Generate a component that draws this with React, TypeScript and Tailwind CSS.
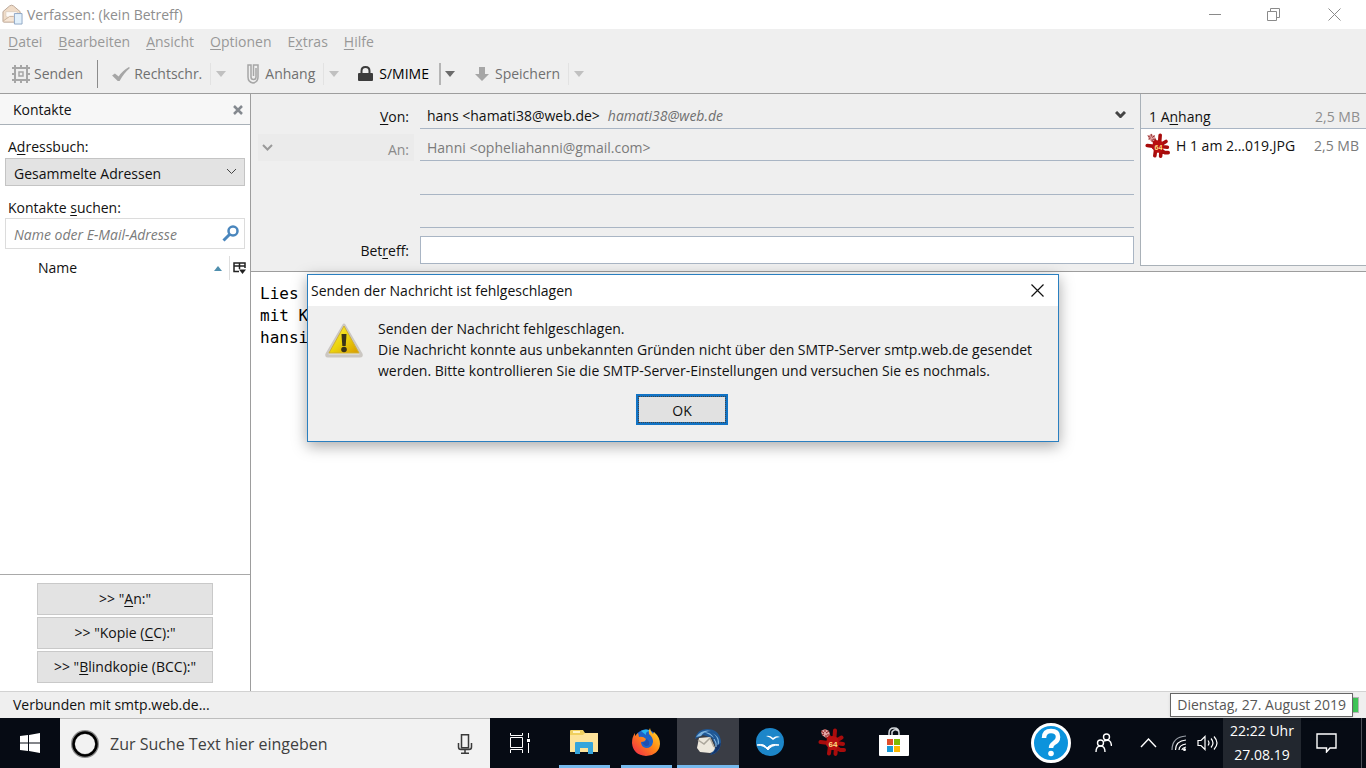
import type { ReactNode } from "react";

const menus = [
  ["", "D", "atei"],
  ["", "B", "earbeiten"],
  ["", "A", "nsicht"],
  ["", "O", "ptionen"],
  ["E", "x", "tras"],
  ["", "H", "ilfe"],
];

const recipientButtons = [
  ['>> "', "A", 'n:"'],
  ['>> "Kopie (', "C", 'C):"'],
  ['>> "', "B", 'lindkopie (BCC):"'],
];

const Mnemonic = ({ parts }: { parts: string[] }) => (
  <span className="whitespace-pre">
    {parts[0]}
    <u className="underline-offset-2">{parts[1]}</u>
    {parts[2]}
  </span>
);

const ComposeIcon = () => (
  <svg width="21" height="21" viewBox="0 0 22 22" aria-hidden="true">
    <path d="M1 8 8 2q2-1.500 4 0l7 6v10q0 1-1 1H2q-1 0-1-1z" fill="#f0dcc8" stroke="#b9a595" />
    <path d="M4 8h12v5l-6 3-6-3z" fill="#fdfaf7" stroke="#e0d0c0" />
    <path d="m1 18 7-5h4l6 5" fill="#f6e6d6" stroke="#c9b29c" />
    <path d="M13 10h8v11h-8z" fill="#e2f0fb" stroke="#8fa6c4" />
  </svg>
);

const SendIcon = () => (
  <svg width="18" height="18" viewBox="0 0 18 18" fill="none" stroke="#a6a6a6" strokeWidth="2" aria-hidden="true">
    <path d="M3 3h12v12H3z" />
    <path d="M0 3h3V0M15 0v3h3M18 15h-3v3M3 18v-3H0M0 9h3M15 9h3M9 0v3M9 15v3" />
    <path d="M7 7h4v4H7z" strokeWidth="1.500" />
  </svg>
);

const CheckIcon = () => (
  <svg width="18" height="15" viewBox="0 0 19 16" aria-hidden="true">
    <path d="m0 9 3-2 4 3Q11 4 18 0l1 1Q12 7 8 15H6z" fill="#a6a6a6" />
  </svg>
);

const ClipIcon = () => (
  <svg className="mr-0.5" width="12" height="20" viewBox="0 0 12 20" fill="none" stroke="#a6a6a6" strokeWidth="1.500" aria-hidden="true">
    <path d="M9 4v9q0 2.500-2.500 2.500T4 13V1H1v12q0 5 5 6 5-1 5-6V1H6.500v11" />
  </svg>
);

const LockIcon = () => (
  <svg className="mr-0.5" width="15" height="16" viewBox="0 0 15 16" aria-hidden="true">
    <path d="M3.500 8V5q0-4 4-4t4 4v3" fill="none" stroke="#3c3c3c" strokeWidth="2" />
    <rect y="7" width="15" height="8" rx="1" fill="#3c3c3c" />
  </svg>
);

const SaveIcon = () => (
  <svg className="mr-0.5" width="14" height="15" viewBox="0 0 14 15" aria-hidden="true">
    <path d="M4 0h6v7h4l-7 7-7-7h4z" fill="#a6a6a6" />
  </svg>
);

const Triangle = ({ dark }: { dark?: boolean }) => (
  <svg width="10" height="6" viewBox="0 0 10 6" aria-hidden="true">
    <path d="M0 0h10L5 6z" fill={dark ? "#6b6b6b" : "#c0c0c0"} />
  </svg>
);

const Chevron = ({ color = "#444", width = 1 }: { color?: string; width?: number }) => (
  <svg width="11" height="7" viewBox="0 0 11 7" fill="none" stroke={color} strokeWidth={width} aria-hidden="true">
    <path d="m1 1 4.500 4.500L10 1" />
  </svg>
);

// Red splat with the "64" badge, shared by the attachment and the taskbar
const SplatIcon = ({ size }: { size: number }) => (
  <svg width={size} height={size} viewBox="0 0 28 28" aria-hidden="true">
    <g fill="none" stroke="#a80c0c" strokeWidth="4" strokeLinecap="round" strokeLinejoin="round">
      <path d="M17 2.500 16.500 9M2.500 14l8 1M23.500 9.500 18 13M18 15l7 1M18 19l4 3h4M12 18l-1 7.500M18 18l-.5 8" />
      <path d="m10 8 3 5" strokeWidth="5" />
    </g>
    <path d="M9 10q5-4 11 0l1 6-3 6h-6l-4-5z" fill="#b81010" />
    <path d="m3 3 4-2 4 2 1 4-4 3-4-3z" fill="#e2a3a3" />
    <path d="m3 3 3 2m1-4v3m4-1L8 5m4 2H9M8 10V7M4 7l2-1" stroke="#861a1a" />
    <text x="15" y="19" textAnchor="middle" fontSize="8" fontWeight="700" fontFamily="Liberation Sans, sans-serif" fill="#ffdf80">
      64
    </text>
  </svg>
);

const WarningIcon = () => (
  <svg width="40" height="38" viewBox="0 0 40 38" aria-hidden="true">
    <defs>
      <linearGradient id="warn" x1="0" y1="0" x2="1" y2="1">
        <stop offset="0" stopColor="#fff04a" />
        <stop offset="0.500" stopColor="#ecd40c" />
        <stop offset="1" stopColor="#d89a00" />
      </linearGradient>
    </defs>
    <path d="M20 3 37 32q1 2-1 2H4q-2 0-1-2z" fill="#e9e7e4" stroke="#cbc7c2" strokeWidth="3" strokeLinejoin="round" />
    <path d="M20 4 35 31H5z" fill="url(#warn)" stroke="#d0b030" strokeWidth="1" strokeLinejoin="round" />
    <path d="M17.500 12h5l-.8 12h-3.400z" fill="#3a3418" />
    <circle cx="20" cy="27.500" r="2.800" fill="#3a3418" />
  </svg>
);

const ToolButton = ({ icon, children, active }: { icon: ReactNode; children: ReactNode; active?: boolean }) => (
  <button type="button" className={active ? "flex items-center gap-1 text-black" : "flex items-center gap-1 text-[#707070]"}>
    {icon}
    {children}
  </button>
);

const TitleBar = () => (
  <header className="flex h-[29px] shrink-0 items-center bg-white pl-0.5 text-[#8e8e8e]">
    <ComposeIcon />
    <h1 className="ml-1">Verfassen: (kein Betreff)</h1>
    <div className="ml-auto flex">
      <button type="button" aria-label="Minimieren" className="grid w-[58px] place-items-center">
        <svg width="12" height="12" stroke="#8a8a8a"><path d="M0 5.500h12" /></svg>
      </button>
      <button type="button" aria-label="Wiederherstellen" className="grid w-[58px] place-items-center">
        <svg width="13" height="13" fill="none" stroke="#8a8a8a"><path d="M.5 3.500h9v9h-9zM3.500 3V.5h9v9H10" /></svg>
      </button>
      <button type="button" aria-label="Schließen" className="grid w-16 place-items-center">
        <svg width="13" height="13" stroke="#8a8a8a"><path d="m.5.500 12 12m0-12-12 12" /></svg>
      </button>
    </div>
  </header>
);

const Toolbar = () => (
  <div className="flex h-[39px] shrink-0 items-center border-b border-[#9d9d9d] pl-3">
    <ToolButton icon={<SendIcon />}>Senden</ToolButton>
    <span className="mx-3.5 h-7 w-px bg-[#8b8b8b]" />
    <ToolButton icon={<CheckIcon />}>Rechtschr.</ToolButton>
    <button type="button" aria-label="Sprache" className="ml-2 border-l border-[#e2e2e2] px-[5px] py-2"><Triangle /></button>
    <span className="w-4" />
    <ToolButton icon={<ClipIcon />}>Anhang</ToolButton>
    <button type="button" aria-label="Anhang-Optionen" className="ml-2 border-l border-[#e2e2e2] px-[5px] py-2"><Triangle /></button>
    <span className="w-3.5" />
    <ToolButton icon={<LockIcon />} active>S/MIME</ToolButton>
    <button type="button" aria-label="S/MIME-Optionen" className="ml-2.5 border-l-2 border-[#b5b5b5] px-1 py-2"><Triangle dark /></button>
    <span className="w-4" />
    <ToolButton icon={<SaveIcon />}>Speichern</ToolButton>
    <button type="button" aria-label="Speicheroptionen" className="ml-2 border-l border-[#e2e2e2] px-[5px] py-2"><Triangle /></button>
  </div>
);

const ContactsSidebar = () => (
  <aside className="flex w-[251px] shrink-0 flex-col border-r border-[#9d9d9d] bg-white">
    <div className="flex h-[31px] items-center justify-between border-b border-[#a9b1b8] bg-[#f7f7f7] pt-0.5 pr-[7px] pl-[13px]">
      <h2>Kontakte</h2>
      <button type="button" aria-label="Kontakte schließen">
        <svg width="10" height="10" stroke="#84898f" strokeWidth="2.500"><path d="m1 1 8 8m0-8L1 9" /></svg>
      </button>
    </div>
    <div className="px-[5px] pt-3">
      <label htmlFor="book" className="block h-[21px] pl-[3px]">A<u className="underline-offset-2">d</u>ressbuch:</label>
      <div className="relative">
        <select id="book" className="h-7 w-full appearance-none border border-[#c4c4c4] bg-[#e3e3e3] pt-1 pl-2">
          <option>Gesammelte Adressen</option>
        </select>
        <span className="pointer-events-none absolute top-2.5 right-2"><Chevron /></span>
      </div>
      <label htmlFor="search" className="mt-3 block h-5 pl-[3px]">Kontakte <u className="underline-offset-2">s</u>uchen:</label>
      <div className="flex h-[31px] items-center border border-[#dcdcdc] pr-1 pl-2">
        <input id="search" placeholder="Name oder E-Mail-Adresse" className="min-w-0 flex-1 pt-0.5 outline-none placeholder:text-[#7b7b7b] placeholder:italic" />
        <svg width="18" height="18" viewBox="0 0 18 18" fill="none" stroke="#4a86bd" aria-hidden="true">
          <circle cx="11" cy="6" r="4.500" strokeWidth="2.500" />
          <path d="m7.500 9.500-6 6" strokeWidth="3" />
        </svg>
      </div>
    </div>
    <div className="mt-[7px] flex h-6 items-center pl-[38px]">
      <span>Name</span>
      <svg className="mr-[7px] ml-auto" width="8" height="5" aria-hidden="true"><path d="M4 0 8 5H0z" fill="#4f8fae" /></svg>
      <button type="button" aria-label="Spalten wählen" className="flex h-6 items-center border-l border-[#dedede] pr-1 pl-[3px]">
        <svg width="13" height="12" viewBox="0 0 13 12" fill="none" stroke="#222" strokeWidth="1.500">
          <path d="M6 9.500H1V1h11v5M1 4h11M6.500 1v6" />
          <path d="M6 7.500h7L9.500 12z" fill="#222" stroke="none" />
        </svg>
      </button>
    </div>
    <div className="flex-1" />
    <div className="flex flex-col items-center gap-0.5 border-t border-[#a9a9a9] py-2">
      {recipientButtons.map((parts) => (
        <button key={parts[2]} type="button" className="h-8 w-[176px] border border-[#c9c9c9] bg-[#e3e3e3]">
          <Mnemonic parts={parts} />
        </button>
      ))}
    </div>
  </aside>
);

const AddressFields = () => (
  <form className="grid min-w-0 flex-1 grid-cols-[156px_1fr] content-start gap-x-1.5 pt-2 pr-1.5 pl-[7px]">
    <label htmlFor="from" className="self-center pt-0.5 pr-[5px] text-right"><u className="underline-offset-2">V</u>on:</label>
    <div className="flex h-[27px] items-center border-b border-[#a9b5c4] pt-0.5 pr-2 pl-[7px]">
      <select id="from" className="field-sizing-content appearance-none">
        <option>hans &lt;hamati38@web.de&gt;</option>
      </select>
      <span className="ml-2 text-[#6f6f6f] italic">hamati38@web.de</span>
      <span className="mb-1 ml-auto"><Chevron width={3} /></span>
    </div>

    <div className="relative mt-[5px] h-[27px] bg-[#ebebeb]">
      <select aria-label="Empfängertyp" disabled className="h-full w-full appearance-none pt-1 pr-[5px] text-right text-[#8a8a8a] opacity-100 [text-align-last:right]">
        <option>An:</option>
      </select>
      <span className="pointer-events-none absolute top-2.5 left-1"><Chevron color="#9a9a9a" width={2} /></span>
    </div>
    <input aria-label="An" disabled defaultValue="Hanni <opheliahanni@gmail.com>" className="h-8 border-b border-[#a9b5c4] pt-1.5 pl-[7px] text-[#7b7b7b]" />

    <input aria-label="Weiterer Empfänger" disabled className="col-start-2 h-[34px] border-b border-[#a9b5c4]" />
    <input aria-label="Weiterer Empfänger" disabled className="col-start-2 h-[33px] border-b border-[#a9b5c4]" />

    <label htmlFor="subject" className="mt-2 self-center pt-0.5 pr-[5px] text-right">Bet<u className="underline-offset-2">r</u>eff:</label>
    <input id="subject" className="mt-2 h-7 border border-[#a9b5c4] bg-white px-2 outline-none" />
  </form>
);

const Attachments = () => (
  <section className="mb-[5px] flex w-[226px] shrink-0 flex-col border-b border-l border-[#a9b1b8]">
    <div className="flex h-[35px] items-end justify-between border-b border-[#a9b5c4] pr-1.5 pb-px pl-2">
      <h2>1 A<u className="underline-offset-2">n</u>hang</h2>
      <span className="text-[#8e8e8e]">2,5 MB</span>
    </div>
    <ul className="flex-1 bg-white pt-1">
      <li className="flex items-center pr-[7px] pl-1">
        <SplatIcon size={25} />
        <span className="ml-1.5">H 1 am 2...019.JPG</span>
        <span className="ml-auto text-[#7b7b7b]">2,5 MB</span>
      </li>
    </ul>
  </section>
);

const ErrorDialog = () => (
  <div className="absolute inset-x-0 top-[274px] flex justify-center">
    <div role="alertdialog" aria-labelledby="dialog-title" className="w-[752px] border border-[#2a7fc0] bg-[#efefef] shadow-[0_4px_14px_rgba(0,0,0,0.35)]">
      <div className="flex h-[31px] items-center justify-between bg-white pr-3.5 pl-[3px]">
        <h2 id="dialog-title">Senden der Nachricht ist fehlgeschlagen</h2>
        <button type="button" aria-label="Schließen">
          <svg width="13" height="13" stroke="#111" strokeWidth="1.200"><path d="m.5.500 12 12m0-12-12 12" /></svg>
        </button>
      </div>
      <div className="flex gap-[14px] px-4 pt-3">
        <div className="pt-1"><WarningIcon /></div>
        <p className="leading-[21px]">
          Senden der Nachricht fehlgeschlagen.
          <br />
          Die Nachricht konnte aus unbekannten Gründen nicht über den SMTP-Server smtp.web.de gesendet
          <br />
          werden. Bitte kontrollieren Sie die SMTP-Server-Einstellungen und versuchen Sie es nochmals.
        </p>
      </div>
      <div className="flex justify-center pt-[13px] pr-0.5 pb-4">
        <button type="button" className="h-[31px] w-[92px] border-[3px] border-[#1273c4] bg-[#e1e1e1] pt-0.5 outline-1 -outline-offset-3 outline-[#444] outline-dotted">
          OK
        </button>
      </div>
    </div>
  </div>
);

const ExplorerIcon = () => (
  <svg width="28" height="24" viewBox="0 0 28 24" aria-hidden="true">
    <path d="M0 1q0-1 1-1h12l2 3h12q1 0 1 1v18H0z" fill="#f0d060" />
    <path d="M3 1h7v2H3z" fill="#fff3c4" />
    <path d="M0 5h13l2-2h13v19H0z" fill="#fde39a" />
    <path d="M5 24V13q0-1 1-1h16q1 0 1 1v11h-5v-6h-8v6z" fill="#35a5dc" />
  </svg>
);

const FirefoxIcon = () => (
  <svg width="28" height="28" viewBox="0 0 28 28" aria-hidden="true">
    <defs>
      <linearGradient id="fox" x1="1" y1="0" x2="0" y2="1">
        <stop offset="0" stopColor="#ffe22e" />
        <stop offset="0.450" stopColor="#ff8a16" />
        <stop offset="1" stopColor="#f0204e" />
      </linearGradient>
    </defs>
    <circle cx="14" cy="13" r="11.500" fill="#1e63c8" />
    <path d="M9 3q5-3 10 0-6 0-5 4z" fill="#27b7f0" />
    <path d="M18 0q0 3 3 6l1-2q6 5 6 12-1 11-14 12Q1 27 0 15q0-6 3-10v3l3-3 1 4q4-1 7 2-1 3-5 3 0 5 5 6 6 0 7-6 0-5-4-8-1-3 1-6z" fill="url(#fox)" />
    <path d="M10 14q4 1 4-3 4 1 3 6-4 3-7-3z" fill="#1e4fb0" />
  </svg>
);

const ThunderbirdIcon = () => (
  <svg width="28" height="28" viewBox="0 0 28 28" aria-hidden="true">
    <path d="M1 11Q3 1 13 1q12 0 14 12 0 12-11 14l6-8-4-9-9-3z" fill="#1f5795" />
    <path d="M2 9q6-8 15-6-7 0-10 5zM18 5q8 4 5 16 6-11-5-16zM10 4q7 0 10 6-5-4-10-6z" fill="#7fb4de" />
    <path d="m5 10 11-1 5 11q-1 4-5 5L6 24l-3-4z" fill="#ece7dc" />
    <path d="m4 12 6 4 6-6 4 9" fill="none" stroke="#aba69b" strokeWidth="1.500" />
    <path d="M14 27q8-2 8-9l5-3q-2 11-13 12z" fill="#14346b" />
    <path d="M20 11q3 4 2 8" fill="none" stroke="#9cc6ea" />
  </svg>
);

const OpenOfficeIcon = () => (
  <svg width="28" height="28" viewBox="0 0 28 28" aria-hidden="true">
    <circle cx="14" cy="14" r="14" fill="#1c86c9" />
    <path d="M10 8q4-1 7 2 3-3 7-1-4 0-7 3-3-3-7-4z" fill="#fff" />
    <path d="M1 17q7-2 10 3 4-5 12-3-8 0-11 5-4-5-11-5z" fill="#fff" stroke="#fff" />
  </svg>
);

const StoreIcon = () => (
  <svg width="30" height="30" viewBox="0 0 30 30" aria-hidden="true">
    <path d="M10 10V6q0-5 5-5t5 5v4M13 8V5q3-4 6-1" fill="none" stroke="#d5d8dc" strokeWidth="1.500" />
    <path d="M0 8h30v20q0 1-1 1H1q-1 0-1-1z" fill="#fff" />
    <path d="M8 12h6v6H8z" fill="#e04f2a" />
    <path d="M15 12h6v6h-6z" fill="#7fba00" />
    <path d="M8 19h6v6H8z" fill="#1a9ad6" />
    <path d="M15 19h6v6h-6z" fill="#fbb900" />
  </svg>
);

const apps = [
  { name: "Explorer", icon: <ExplorerIcon />, open: true },
  { name: "Firefox", icon: <FirefoxIcon />, open: true },
  { name: "Thunderbird", icon: <ThunderbirdIcon />, open: true, current: true },
  { name: "OpenOffice", icon: <OpenOfficeIcon /> },
  { name: "IrfanView 64", icon: <SplatIcon size={28} /> },
  { name: "Store", icon: <StoreIcon /> },
];

const Taskbar = () => (
  <footer className="flex h-[50px] shrink-0 bg-[#060b14] text-white">
    <button type="button" aria-label="Start" className="grid w-[60px] place-items-center">
      <svg width="20" height="20" viewBox="0 0 20 20" fill="#fff">
        <path d="m0 3 8-1v7.500H0zM9 2l11-2v9.500H9zM0 10.500h8V18l-8-1zM9 10.500h11V20L9 18z" />
      </svg>
    </button>
    <div className="flex w-[430px] items-center border-t border-[#bdbdbd] bg-[#f2f2f2] pr-[17px] pl-[11px]">
      <svg width="28" height="28" fill="none" aria-hidden="true">
        <circle cx="14" cy="14" r="12" stroke="#8b8b8b" strokeWidth="4" />
        <circle cx="14" cy="14" r="11.500" stroke="#000" strokeWidth="2.500" />
      </svg>
      <input aria-label="Suche" placeholder="Zur Suche Text hier eingeben" className="ml-[11px] min-w-0 flex-1 text-base outline-none placeholder:text-[#3f3f3f]" />
      <svg width="16" height="20" viewBox="0 0 16 20" fill="none" stroke="#3a3a3a" strokeWidth="1.500" aria-hidden="true">
        <path d="M4.500.8h7v13h-7zM1.500 9v4q0 2.500 2.500 2.500h8q2.500 0 2.500-2.500V9M8 15.500v3.700M4 19.200h8" />
      </svg>
    </div>
    <button type="button" aria-label="Taskansicht" className="grid w-[63px] place-items-center pr-1">
      <svg width="22" height="20" viewBox="0 0 22 20" fill="none" stroke="#fff">
        <path d="M1.500 4.500h12v10h-12zM1.500 0v2.500h12V0M1.500 20v-3.500h12V20M19.500 0v5M19.500 10v10" />
        <path d="M18 6h3v3h-3z" fill="#fff" stroke="none" />
      </svg>
    </button>
    {apps.map((app) => (
      <button
        key={app.name}
        type="button"
        aria-label={app.name}
        className={app.current ? "flex w-[62px] flex-col items-center bg-[#3a3d45]" : "flex w-[62px] flex-col items-center"}
      >
        <span className="grid flex-1 place-items-center">{app.icon}</span>
        <span className={app.current ? "h-[3px] w-full bg-[#76b9ed]" : app.open ? "h-[3px] w-[51px] bg-[#76b9ed]" : "h-[3px]"} />
      </button>
    ))}
    <div className="ml-auto flex items-center">
      <button type="button" aria-label="Hilfe">
        <svg width="40" height="40" viewBox="0 0 40 40" fill="none">
          <circle cx="20" cy="20" r="18.500" fill="#0c93dc" stroke="#fff" strokeWidth="3" />
          <path d="M13 15q0-7 7-7t7 6q0 4-4 6-3 2-3 5" stroke="#fff" strokeWidth="4.500" />
          <circle cx="20" cy="30.500" r="2.800" fill="#fff" />
        </svg>
      </button>
      <button type="button" aria-label="Kontakte" className="ml-6">
        <svg width="17" height="20" viewBox="0 0 17 20" fill="none" stroke="#fff" strokeWidth="1.400">
          <circle cx="5.500" cy="10" r="3" />
          <path d="M1 19q0-6 4.500-6t4.500 6" />
          <circle cx="11.500" cy="4" r="3" />
          <path d="M9 8q7-3 7.500 5" />
        </svg>
      </button>
      <button type="button" aria-label="Ausgeblendete Symbole" className="ml-7">
        <svg width="17" height="10" fill="none" stroke="#fff" strokeWidth="1.400"><path d="m1 9 7.500-8L16 9" /></svg>
      </button>
      <button type="button" aria-label="WLAN" className="ml-3.5">
        <svg width="16" height="16" viewBox="0 0 16 16" fill="none" stroke="#fff" strokeWidth="1.200">
          <path d="M1 15Q1 2 15 1" stroke="#9aa0a8" />
          <path d="M4.500 15q0-9 10.500-10M8 15q0-5 7-6M11 15q0-2 4-3" />
          <circle cx="13.500" cy="14.500" r="1.500" fill="#fff" stroke="none" />
        </svg>
      </button>
      <button type="button" aria-label="Lautstärke" className="ml-2.5">
        <svg width="22" height="16" viewBox="0 0 22 16" fill="none" stroke="#fff" strokeWidth="1.200">
          <path d="M1 5.500h3l4-4v13l-4-4H1zM11 5.500q2 2.500 0 5M14 3.500q4 4.500 0 9M17 1.500q6 6.500 0 13" />
        </svg>
      </button>
      <button type="button" className="ml-1 h-full w-[78px] bg-[#22272f] leading-6">
        22:22 Uhr
        <br />
        27.08.19
      </button>
      <button type="button" aria-label="Benachrichtigungen" className="grid w-[50px] place-items-center">
        <svg width="21" height="20" viewBox="0 0 21 20" fill="none" stroke="#fff" strokeWidth="1.400">
          <path d="M1 1h19v14h-6l-3.500 4v-4H1z" />
        </svg>
      </button>
      <span className="ml-2.5 h-full w-[5px] border-l border-[#4c5058]" />
    </div>
  </footer>
);

export default function App() {
  return (
    <div className="relative flex h-screen flex-col overflow-hidden bg-[#efefef] font-['Open_Sans','Noto_Sans',sans-serif] text-sm leading-5 text-[#111]">
      <TitleBar />
      <nav className="flex h-[26px] shrink-0 items-center gap-4 pl-2 text-[#989898]">
        {menus.map((parts) => (
          <button key={parts[2]} type="button"><Mnemonic parts={parts} /></button>
        ))}
      </nav>
      <Toolbar />
      <div className="flex min-h-0 flex-1">
        <ContactsSidebar />
        <main className="flex min-w-0 flex-1 flex-col">
          <div className="flex h-[178px] shrink-0 border-b border-[#9d9d9d]">
            <AddressFields />
            <Attachments />
          </div>
          <textarea
            aria-label="Nachricht"
            defaultValue={"Lies\nmit K\nhansi"}
            className="flex-1 resize-none bg-white px-[9px] py-[11px] font-['DejaVu_Sans_Mono',monospace] text-base leading-[22px] text-black outline-none"
          />
        </main>
      </div>
      <div className="relative flex h-[27px] shrink-0 items-center justify-between border-t border-[#d2d2d2] pl-[13px]">
        <span>Verbunden mit smtp.web.de...</span>
        <span className="mr-[7px] h-4 w-10 border border-[#b5b5b5] bg-[#3fc557]" />
        <span role="tooltip" className="absolute top-px right-[13px] border border-[#666] bg-white px-1.5 leading-[22px] text-[#575757] shadow-sm">
          Dienstag, 27. August 2019
        </span>
      </div>
      <Taskbar />
      <ErrorDialog />
    </div>
  );
}
